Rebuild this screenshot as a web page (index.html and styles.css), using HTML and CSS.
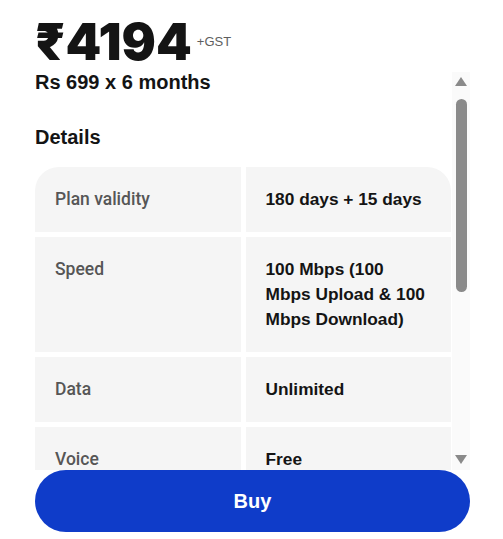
FILE: index.html
```html
<!DOCTYPE html>
<html>
<head>
<meta charset="utf-8">
<link rel="stylesheet" href="styles.css">
</head>
<body>
<div class="page">
  <div class="price-row">
    <span class="price">₹4194</span>
    <span class="gst">+GST</span>
  </div>
  <div class="scroll-row">
    <div class="content">
      <div class="subtitle">Rs 699 x 6 months</div>
      <div class="details-title">Details</div>
      <div class="table">
        <div class="cell label first-left">Plan validity</div>
        <div class="cell value first-right">180 days + 15 days</div>
        <div class="cell label">Speed</div>
        <div class="cell value">100 Mbps (100 Mbps Upload &amp; 100 Mbps Download)</div>
        <div class="cell label">Data</div>
        <div class="cell value">Unlimited</div>
        <div class="cell label">Voice</div>
        <div class="cell value">Free</div>
      </div>
    </div>
    <div class="scrollbar">
      <div class="arrow up"></div>
      <div class="track">
        <div class="thumb"></div>
      </div>
      <div class="arrow down"></div>
    </div>
  </div>
  <button class="buy">Buy</button>
</div>
</body>
</html>
```
FILE: styles.css
```css
html, body {
  margin: 0;
  padding: 0;
  background: #ffffff;
}
body {
  font-family: "Liberation Sans", Arial, sans-serif;
  color: #141414;
}
.page {
  width: 435px;
  padding: 0 33px 0 35px;
  display: flex;
  flex-direction: column;
}
.price-row {
  display: flex;
  align-items: flex-start;
  padding-top: 16px;
  height: 58px;
  box-sizing: border-box;
}
.price {
  font-family: Inter, "DejaVu Sans", sans-serif;
  font-weight: 900;
  font-size: 51px;
  line-height: 1;
  letter-spacing: 0;
  color: #141414;
}
.gst {
  font-size: 13px;
  line-height: 1;
  color: #5e5e5e;
  margin-left: 5px;
  margin-top: 19px;
}
.scroll-row {
  display: flex;
  height: 412px;
  gap: 1px;
}
.content {
  flex: 1;
  overflow: hidden;
  display: flex;
  flex-direction: column;
}
.subtitle {
  font-size: 20px;
  font-weight: 700;
  line-height: 24px;
  margin-top: 12px;
}
.details-title {
  font-size: 20px;
  font-weight: 700;
  line-height: 24px;
  margin-top: 31px;
}
.table {
  margin-top: 18px;
  display: grid;
  grid-template-columns: 1fr 1fr;
  gap: 5px;
}
.cell {
  background: #f5f5f5;
  padding: 20px;
  font-size: 17.3px;
  line-height: 25px;
}
.label {
  font-family: Roboto, "Liberation Sans", sans-serif;
  font-weight: 500;
  font-size: 17.5px;
  color: #565656;
}
.value {
  font-weight: 700;
  color: #141414;
  padding-right: 24px;
}
.first-left {
  border-top-left-radius: 24px;
}
.first-right {
  border-top-right-radius: 24px;
}
.scrollbar {
  width: 18px;
  margin-top: 14px;
  background: #fafafa;
  display: flex;
  flex-direction: column;
  align-items: center;
}
.arrow {
  width: 0;
  height: 0;
  border-left: 6px solid transparent;
  border-right: 6px solid transparent;
}
.arrow.up {
  margin-top: 5px;
  border-bottom: 9px solid #8a8a8a;
}
.arrow.down {
  margin-bottom: 6px;
  border-top: 9px solid #8a8a8a;
}
.track {
  flex: 1;
  width: 11px;
  padding-top: 13px;
}
.thumb {
  width: 11px;
  height: 193px;
  background: #8a8a8a;
  border-radius: 6px;
}
.buy {
  height: 62px;
  border: none;
  border-radius: 31px;
  background: #0f3cc9;
  color: #ffffff;
  font-family: "Liberation Sans", Arial, sans-serif;
  font-weight: 700;
  font-size: 20px;
  width: 435px;
  padding: 0;
  cursor: pointer;
}
```
